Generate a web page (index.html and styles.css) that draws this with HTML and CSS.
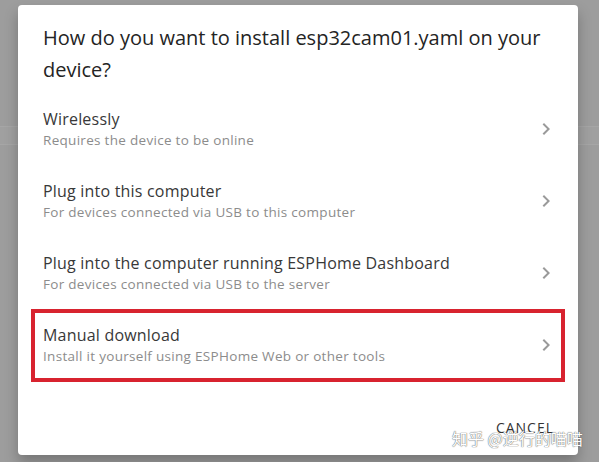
FILE: index.html
```html
<!DOCTYPE html>
<html>
<head>
<meta charset="utf-8">
<link rel="stylesheet" href="styles.css">
</head>
<body>
<div class="backdrop">
  <div class="page-line"></div>
  <div class="dialog">
    <h2 class="title">How do you want to install esp32cam01.yaml on your device?</h2>
    <ul class="list">
      <li class="item">
        <div class="text">
          <span class="primary">Wirelessly</span>
          <span class="secondary">Requires the device to be online</span>
        </div>
        <svg class="chev" viewBox="0 0 24 24"><path d="M8.59,16.58L13.17,12L8.59,7.41L10,6L16,12L10,18L8.59,16.58Z"/></svg>
      </li>
      <li class="item">
        <div class="text">
          <span class="primary">Plug into this computer</span>
          <span class="secondary">For devices connected via USB to this computer</span>
        </div>
        <svg class="chev" viewBox="0 0 24 24"><path d="M8.59,16.58L13.17,12L8.59,7.41L10,6L16,12L10,18L8.59,16.58Z"/></svg>
      </li>
      <li class="item">
        <div class="text">
          <span class="primary">Plug into the computer running ESPHome Dashboard</span>
          <span class="secondary">For devices connected via USB to the server</span>
        </div>
        <svg class="chev" viewBox="0 0 24 24"><path d="M8.59,16.58L13.17,12L8.59,7.41L10,6L16,12L10,18L8.59,16.58Z"/></svg>
      </li>
      <li class="item highlighted">
        <div class="text">
          <span class="primary">Manual download</span>
          <span class="secondary">Install it yourself using ESPHome Web or other tools</span>
        </div>
        <svg class="chev" viewBox="0 0 24 24"><path d="M8.59,16.58L13.17,12L8.59,7.41L10,6L16,12L10,18L8.59,16.58Z"/></svg>
      </li>
    </ul>
    <div class="actions">
      <button class="cancel">Cancel</button>
    </div>
  </div>
  <div class="watermark">知乎 @逆行的喵喵</div>
</div>
</body>
</html>
```

FILE: styles.css
```css
html, body {
  margin: 0;
  padding: 0;
}
body {
  width: 599px;
  height: 462px;
  overflow: hidden;
  background: #9d9d9d;
  font-family: "Open Sans", "Noto Sans", sans-serif;
}
.backdrop {
  position: relative;
  width: 599px;
  height: 462px;
  padding: 5px 0 0 18px;
  box-sizing: border-box;
}
.page-line {
  position: absolute;
  left: 0;
  right: 0;
  top: 126px;
  height: 17px;
  border-top: 1px solid #a6a6a6;
  border-bottom: 1px solid #a6a6a6;
  background: #a0a0a0;
}
.dialog {
  position: relative;
  width: 560px;
  height: 450px;
  background: #fff;
  border-radius: 4px;
  box-shadow: 0 8px 14px rgba(0,0,0,0.25);
  display: flex;
  flex-direction: column;
}
.title {
  margin: 0;
  padding: 17px 30px 0 25px;
  font-size: 20px;
  line-height: 32px;
  font-weight: 400;
  color: #242424;
}
.list {
  list-style: none;
  margin: 7px 0 0;
  padding: 0;
}
.item {
  position: relative;
  height: 72px;
  display: flex;
  align-items: center;
  padding: 0 20px 0 25px;
}
.text {
  flex: 1;
  display: flex;
  flex-direction: column;
}
.primary {
  font-size: 16px;
  line-height: 21px;
  letter-spacing: 0.2px;
  color: #383838;
}
.secondary {
  font-size: 13.5px;
  line-height: 20px;
  letter-spacing: 0.3px;
  color: #8c8c8c;
}
.chev {
  width: 24px;
  height: 24px;
  fill: #9a9a9a;
}
.highlighted::after {
  content: "";
  position: absolute;
  left: 13px;
  right: 13px;
  top: 0;
  bottom: -1px;
  border: 4px solid #d8232f;
}
.actions {
  margin-top: auto;
  display: flex;
  justify-content: flex-end;
  padding: 0 16px 10px;
}
.cancel {
  background: none;
  border: none;
  text-transform: uppercase;
  font-family: "Open Sans", "Noto Sans", sans-serif;
  font-size: 14px;
  letter-spacing: 1px;
  color: #333;
  padding: 8px;
}
.watermark {
  position: absolute;
  left: 452px;
  top: 426px;
  font-family: "Noto Sans CJK SC", sans-serif;
  font-size: 16px;
  color: #fff;
  text-shadow: 0 0 1px #666, 0 0 1px #666;
}
```
